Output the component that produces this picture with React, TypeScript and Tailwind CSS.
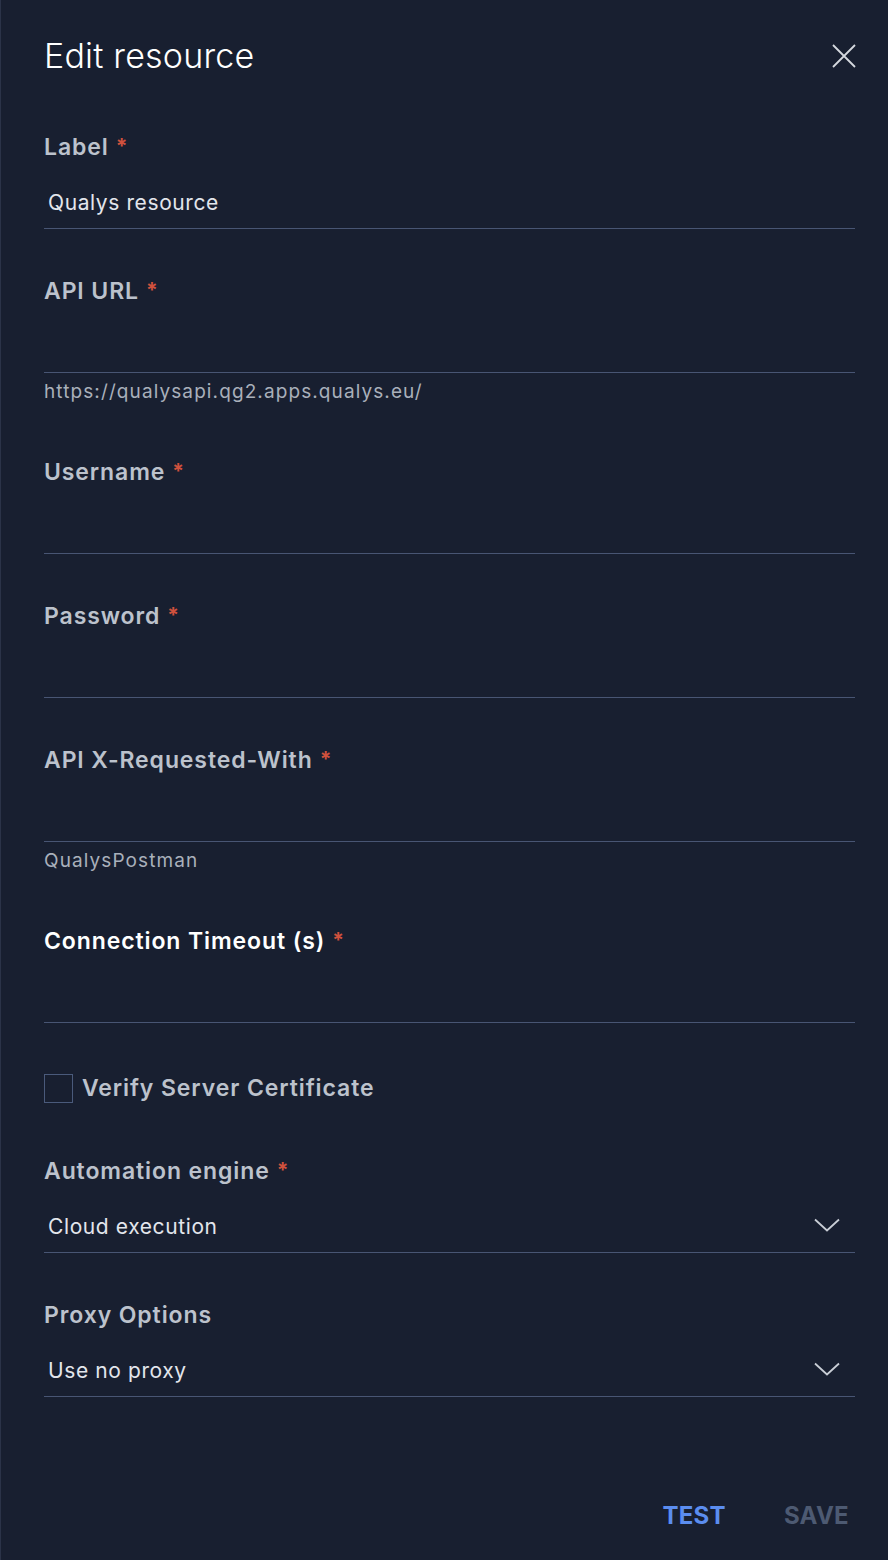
import { ReactNode } from "react"

const font = { fontFamily: "Inter, 'Noto Sans', Arial, sans-serif" }

function Label({ text, required = true, active = false }: { text: string; required?: boolean; active?: boolean }) {
  return (
    <div className={`h-8 flex items-center text-[23px] font-semibold tracking-[0.9px] ${active ? "text-white" : "text-[#bcc2cc]"}`}>
      <span>{text}</span>
      {required && <span className="ml-[7px] text-[21px] text-[#d0513d] font-bold">*</span>}
    </div>
  )
}

function Field({
  label,
  value,
  helper,
  active,
  required,
  select,
}: {
  label: string
  value?: string
  helper?: string
  active?: boolean
  required?: boolean
  select?: boolean
}) {
  return (
    <div className="mb-[46px]">
      <Label text={label} active={active} required={required} />
      <div className="h-[66px] border-b border-[#485573] flex items-end justify-between pb-[12px] pl-[4px]">
        <span className="text-[21px] leading-[26px] text-[#e3e6ec] tracking-[0.6px]">{value}</span>
        {select && (
          <svg width="26" height="14" viewBox="0 0 26 14" className="mr-[15px] mb-[8px]" fill="none">
            <path d="M1 1.5 L13 12.5 L25 1.5" stroke="#c9ced6" strokeWidth="1.8" />
          </svg>
        )}
      </div>
      {helper && (
        <div className="h-[37px] pt-[9px]">
          <div className="text-[19px] leading-[20px] text-[#a9b0bb] tracking-[1.1px]">{helper}</div>
        </div>
      )}
    </div>
  )
}

function Section({ children }: { children: ReactNode }) {
  return <div>{children}</div>
}

export default function App() {
  return (
    <div className="w-[888px] h-[1560px] bg-[#181f30] border-l border-[#2b3348] text-white flex flex-col" style={font}>
      <div className="pl-[43px] pr-[32px] pt-[31px] flex items-center justify-between h-[80px]">
        <h1 className="text-[34px] font-light leading-[48px] text-white tracking-[0.2px]">Edit resource</h1>
        <svg width="24" height="24" viewBox="0 0 24 24" fill="none">
          <path d="M1 1 L23 23 M23 1 L1 23" stroke="#d5d9df" strokeWidth="1.8" />
        </svg>
      </div>

      <div className="pl-[43px] pr-[33px] pt-[51px] flex-1 flex flex-col">
        <Section>
          <Field label="Label" value="Qualys resource" />
          <Field label="API URL" helper="https://qualysapi.qg2.apps.qualys.eu/" />
          <Field label="Username" />
          <Field label="Password" />
          <Field label="API X-Requested-With" helper="QualysPostman" />
          <Field label="Connection Timeout (s)" active />
        </Section>

        <label className="h-8 flex items-center gap-[9px] mt-[3px]">
          <span className="w-[29px] h-[29px] border border-[#4a5a7b] block" />
          <span className="text-[23px] font-semibold text-[#bcc2cc] tracking-[0.9px]">Verify Server Certificate</span>
        </label>

        <div className="mt-[51px]">
          <Field label="Automation engine" value="Cloud execution" select />
          <Field label="Proxy Options" value="Use no proxy" required={false} select />
        </div>

        <div className="mt-auto flex justify-end gap-[58px] pb-[26px] pr-[6px]">
          <button className="text-[24px] font-bold text-[#5b8def] tracking-[0.3px]">TEST</button>
          <button className="text-[24px] font-bold text-[#4d5a72] tracking-[0.3px]">SAVE</button>
        </div>
      </div>
    </div>
  )
}
